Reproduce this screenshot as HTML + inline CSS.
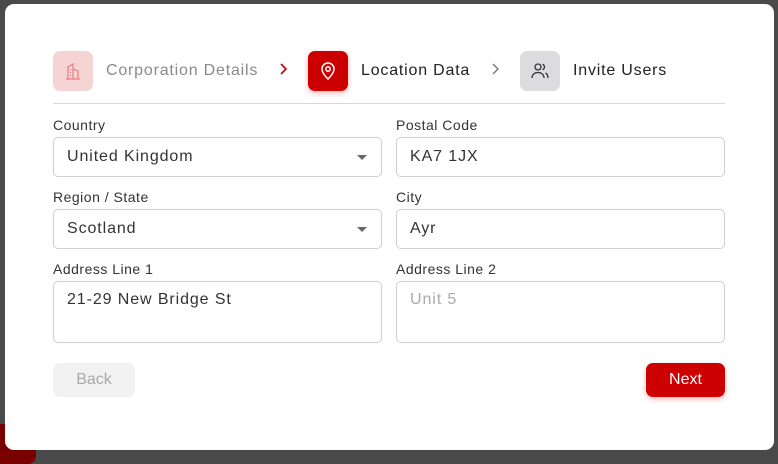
<!DOCTYPE html>
<html><head><meta charset="utf-8">
<style>
*{box-sizing:border-box;margin:0;padding:0}
body{width:778px;height:458px;background:#4a4a4a;font-family:"Liberation Sans",sans-serif;position:relative;overflow:hidden}
.blob{position:absolute;left:-10px;top:424px;width:46px;height:40px;background:#7a0000;border-radius:8px}
.modal{position:absolute;left:5px;top:4px;width:769px;height:446px;background:#fff;border-radius:9px}
.step{position:absolute;top:47px;height:40px;display:flex;align-items:center}
.ic{width:40px;height:40px;border-radius:7px;display:flex;align-items:center;justify-content:center}
.st{font-size:16px;margin-left:13px;letter-spacing:0.8px}
.chev{position:absolute;top:58px}
.hr{position:absolute;left:48px;top:99px;width:672px;height:1px;background:#d8d8d8}
.lbl{position:absolute;font-size:14px;color:#333;letter-spacing:0.5px}
.inp{position:absolute;width:329px;height:40px;border:1px solid #cfcfcf;border-radius:5px;font-size:16px;color:#333;padding:0 13px;line-height:38px;letter-spacing:0.9px}
.inp.tall{height:62px;line-height:36px}
.arr{position:absolute;right:14px;top:17px;width:0;height:0;border-left:5px solid transparent;border-right:5px solid transparent;border-top:5px solid #666}
.btn{position:absolute;top:359px;height:34px;border-radius:7px;font-size:16px;display:flex;align-items:center;justify-content:center}
</style></head><body>
<div class="blob"></div>
<div class="modal">
 <div class="step" style="left:48px">
  <div class="ic" style="background:#f7d4d4">
   <svg width="18" height="18" viewBox="0 0 18 18" fill="none" stroke="#e57f7f" stroke-width="1.2"><path d="M2 17h14M4 17V5l5-3v15M9 7l5 2v8M6.5 7v1M6.5 10v1M6.5 13v1"/></svg>
  </div>
  <span class="st" style="color:#8a8a8a">Corporation Details</span>
 </div>
 <svg class="chev" style="left:274px" width="10" height="14" viewBox="0 0 10 14" fill="none" stroke="#c40000" stroke-width="1.6"><path d="M2 2l5 5-5 5"/></svg>
 <div class="step" style="left:303px">
  <div class="ic" style="background:#cc0000;box-shadow:0 2px 6px rgba(204,0,0,.3)">
   <svg width="18" height="20" viewBox="0 0 18 20" fill="none" stroke="#fff" stroke-width="1.5"><path d="M9 18s6-5.5 6-10A6 6 0 0 0 3 8c0 4.5 6 10 6 10z"/><circle cx="9" cy="8" r="2.2"/></svg>
  </div>
  <span class="st" style="color:#222">Location Data</span>
 </div>
 <svg class="chev" style="left:486px" width="10" height="14" viewBox="0 0 10 14" fill="none" stroke="#777" stroke-width="1.4"><path d="M2 2l5 5-5 5"/></svg>
 <div class="step" style="left:515px">
  <div class="ic" style="background:#dcdcdf">
   <svg width="20" height="18" viewBox="0 0 20 18" fill="none" stroke="#333" stroke-width="1.3"><circle cx="8" cy="5" r="3"/><path d="M2 16c0-3.5 2.7-5.5 6-5.5s6 2 6 5.5M12.5 2.2a3 3 0 0 1 0 5.6M15.5 11c1.6.8 2.5 2.4 2.5 5"/></svg>
  </div>
  <span class="st" style="color:#222">Invite Users</span>
 </div>
 <div class="hr"></div>

 <div class="lbl" style="left:48px;top:113px">Country</div>
 <div class="inp" style="left:48px;top:133px">United Kingdom<div class="arr"></div></div>
 <div class="lbl" style="left:391px;top:113px">Postal Code</div>
 <div class="inp" style="left:391px;top:133px">KA7 1JX</div>

 <div class="lbl" style="left:48px;top:185px">Region / State</div>
 <div class="inp" style="left:48px;top:205px">Scotland<div class="arr"></div></div>
 <div class="lbl" style="left:391px;top:185px">City</div>
 <div class="inp" style="left:391px;top:205px">Ayr</div>

 <div class="lbl" style="left:48px;top:257px">Address Line 1</div>
 <div class="inp tall" style="left:48px;top:277px">21-29 New Bridge St</div>
 <div class="lbl" style="left:391px;top:257px">Address Line 2</div>
 <div class="inp tall" style="left:391px;top:277px;color:#aaa">Unit 5</div>

 <div class="btn" style="left:48px;width:82px;background:#f1f1f1;color:#aaa">Back</div>
 <div class="btn" style="left:641px;width:79px;background:#cc0000;color:#fff;box-shadow:0 2px 6px rgba(204,0,0,.3)">Next</div>
</div>
</body></html>
